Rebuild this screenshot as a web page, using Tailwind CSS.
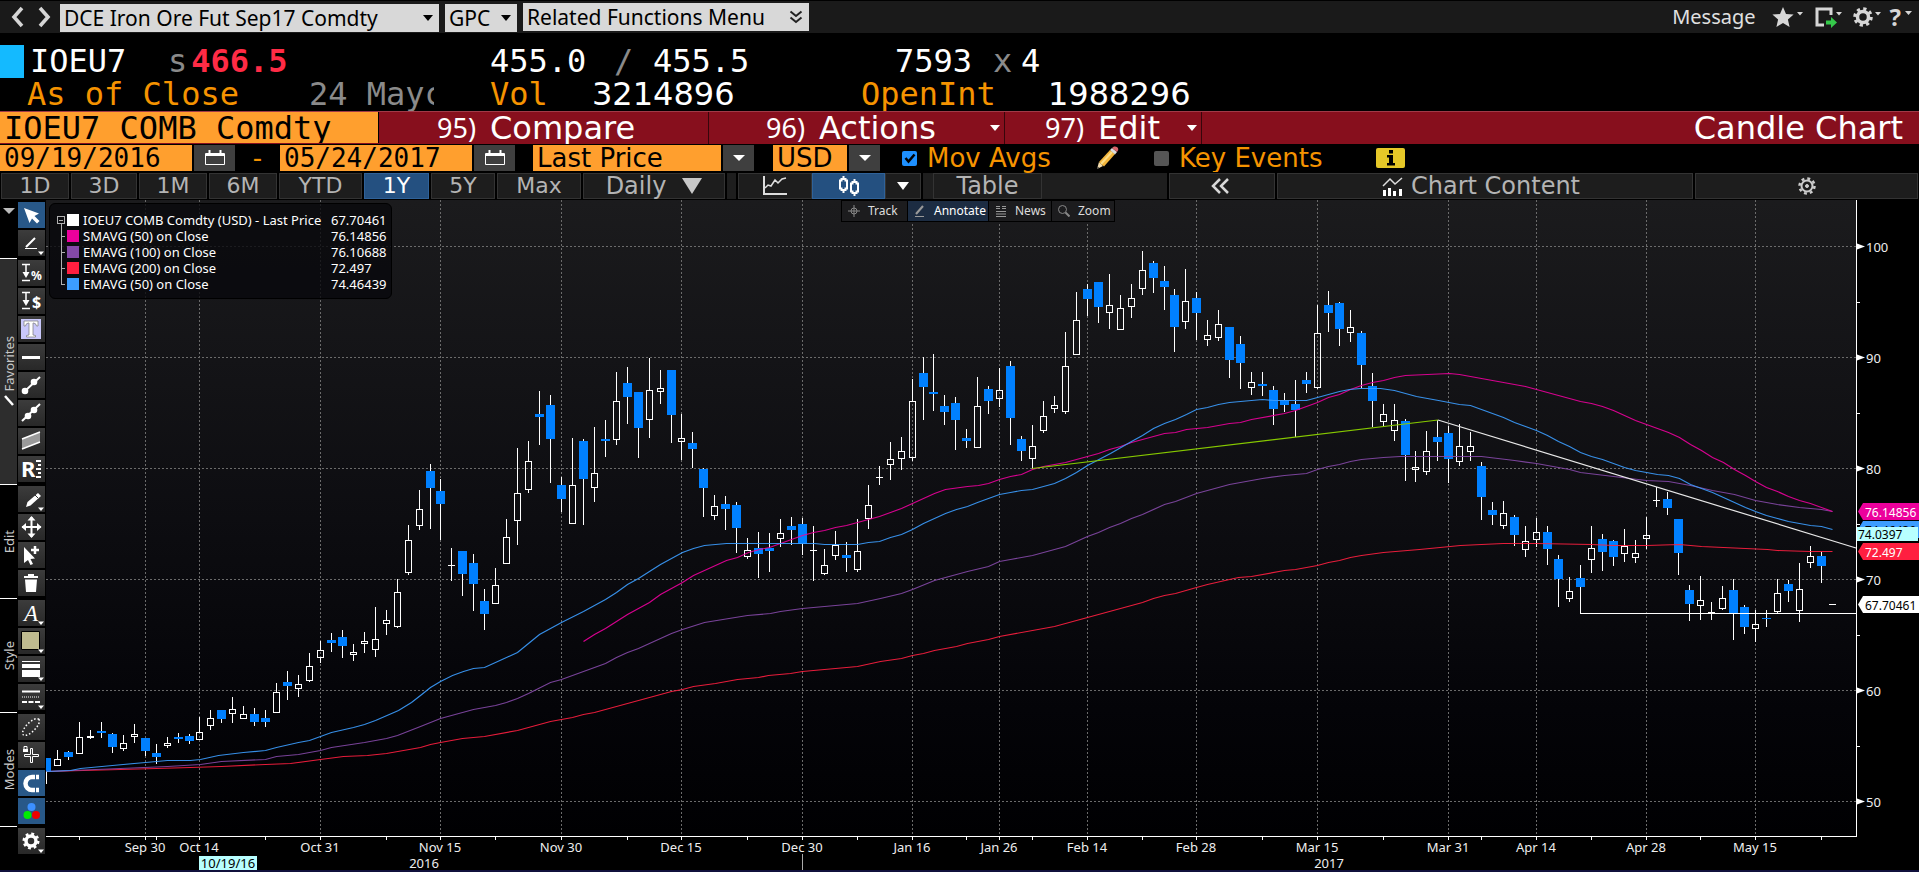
<!DOCTYPE html>
<html lang="en">
<head>
<meta charset="utf-8">
<meta name="viewport" content="width=device-width, initial-scale=1">
<title>IOEU7 COMB Comdty - Candle Chart</title>
<script src="https://cdn.jsdelivr.net/npm/@tailwindcss/browser@4"></script>
</head>
<body class="flex min-h-screen flex-col bg-black font-['Noto_Sans','Open_Sans',sans-serif] text-white">

<!-- Title bar -->
<header class="flex h-[33px] items-center border-t border-black bg-[#1a1a1a] text-[21px] text-black">
  <button type="button" aria-label="Back" class="ml-2.5 flex h-7 w-4 items-center justify-center"><svg class="h-6 w-4" viewBox="0 0 16 24" fill="none" stroke="#d6d6d6" stroke-width="3.6"><path d="M12 3 4 12l8 9"/></svg></button>
  <button type="button" aria-label="Forward" class="ml-2.5 mr-2 flex h-7 w-4 items-center justify-center"><svg class="h-6 w-4" viewBox="0 0 16 24" fill="none" stroke="#d6d6d6" stroke-width="3.6"><path d="m4 3 8 9-8 9"/></svg></button>
  <div class="relative h-7 w-[379px]">
    <select aria-label="Security" class="h-7 w-full appearance-none bg-[#d8d8d8] pl-1 leading-7"><option>DCE Iron Ore Fut Sep17 Comdty</option></select>
    <svg class="pointer-events-none absolute right-1.5 top-3 h-1.5 w-2.5" viewBox="0 0 10 6"><path d="M0 0h10L5 6z"/></svg>
  </div>
  <div class="relative ml-1.5 h-7 w-[72px]">
    <select aria-label="Function" class="h-7 w-full appearance-none bg-[#d8d8d8] pl-1 leading-7"><option>GPC</option></select>
    <svg class="pointer-events-none absolute right-1.5 top-3 h-1.5 w-2.5" viewBox="0 0 10 6"><path d="M0 0h10L5 6z"/></svg>
  </div>
  <button type="button" class="ml-1.5 flex h-7 w-[286px] items-center justify-between bg-[#d8d8d8] pl-1 pr-1.5 leading-7">Related Functions Menu
    <svg class="h-3.5 w-3.5" viewBox="0 0 14 14" fill="none" stroke="#222" stroke-width="2"><path d="m1.500 1.500 5.500 4.500 5.500-4.500M1.500 7.500 7 12l5.500-4.500"/></svg>
  </button>
  <button type="button" class="ml-auto text-xl text-[#e0e0e0]">Message</button>
  <button type="button" aria-label="Favorites menu" class="ml-4"><svg class="h-6 w-8" viewBox="0 0 32 24" fill="#d6d6d6"><path d="m11 2 3 7 7.600.600-5.700 5 1.700 7.400-6.600-4-6.600 4 1.700-7.400-5.700-5L8 9zM25 7h6l-3 3.500z"/></svg></button>
  <button type="button" aria-label="Export" class="ml-2"><svg class="h-6 w-8" viewBox="0 0 32 24"><path d="M19 10V4H5v16h7" fill="none" stroke="#d6d6d6" stroke-width="3"/><path d="M14 15.500h5V12l6 5.500-6 5.500v-3.500h-5z" fill="#35c94a"/><path d="M24 7h6l-3 3.500z" fill="#d6d6d6"/></svg></button>
  <button type="button" aria-label="Settings" class="ml-2"><svg class="h-6 w-8" viewBox="0 0 32 24"><circle cx="11" cy="12" r="5.500" fill="none" stroke="#d6d6d6" stroke-width="3.500"/><circle cx="11" cy="12" r="8" fill="none" stroke="#d6d6d6" stroke-width="3.500" stroke-dasharray="3.140 3.140"/><path d="M23 7h6l-3 3.500z" fill="#d6d6d6"/></svg></button>
  <button type="button" aria-label="Help" class="ml-1.5 mr-1.5 flex items-center text-2xl font-bold text-[#d6d6d6]">?<svg class="mb-2 ml-1 h-1 w-2" viewBox="0 0 8 4" fill="#d6d6d6"><path d="M0 0h7L3.500 4z"/></svg></button>
</header>

<!-- Quote -->
<section class="grid h-[78px] grid-cols-[461px_400px_1fr] grid-rows-[33px_33px] content-end bg-black font-['DejaVu_Sans_Mono',monospace] text-[32px] leading-[33px] whitespace-pre">
  <div class="flex"><span class="mr-[6px] h-[33px] w-6 bg-[#14baff]"></span><span class="w-[138px]">IOEU7</span><span class="text-[#8a8a8a]">s</span><span class="ml-1 font-bold text-[#ff2b45]">466.5</span></div>
  <div class="flex pl-[29px]"><span class="w-[124px]">455.0</span><span class="w-[39px] text-[#8a8a8a]">/</span><span>455.5</span></div>
  <div class="flex pl-[34px]"><span class="w-[98px]">7593</span><span class="w-[28px] text-[#8a8a8a]">x</span><span>4</span></div>
  <div class="flex pl-[27px] text-[#f59300]"><span class="w-[282px]">As of Close</span><span class="w-[125px] overflow-hidden text-[#8a8a8a]">24 Mayc</span></div>
  <div class="flex pl-[29px]"><span class="w-[102px] text-[#f59300]">Vol</span><span class="font-['DejaVu_Sans',sans-serif]">3214896</span></div>
  <div class="flex"><span class="w-[187px] text-[#f59300]">OpenInt</span><span class="font-['DejaVu_Sans',sans-serif]">1988296</span></div>
</section>

<!-- Function bar -->
<nav class="flex h-[33px] border-t border-[#a03a48] bg-[#870f1d] font-['DejaVu_Sans',sans-serif] text-[32px] leading-8">
  <input aria-label="Ticker" value="IOEU7 COMB Comdty" class="h-[31px] w-[379px] border-r border-black bg-[#ff9f2e] pl-1 font-['DejaVu_Sans_Mono',monospace] text-black">
  <button type="button" class="flex w-[330px] gap-3.5 border-r border-black/60 pl-[58px]"><span class="font-['Noto_Sans',sans-serif] text-[27px]">95)</span>Compare</button>
  <button type="button" class="flex w-[296px] items-center gap-3.5 border-r border-black/60 pl-[57px]"><span class="font-['Noto_Sans',sans-serif] text-[27px]">96)</span>Actions<svg class="ml-auto mr-1 h-1.5 w-2.5" viewBox="0 0 10 6" fill="#fff"><path d="M0 0h10L5 6z"/></svg></button>
  <button type="button" class="flex w-[197px] items-center gap-3.5 border-r border-black/60 pl-10"><span class="font-['Noto_Sans',sans-serif] text-[27px]">97)</span>Edit<svg class="ml-auto mr-1 h-1.5 w-2.5" viewBox="0 0 10 6" fill="#fff"><path d="M0 0h10L5 6z"/></svg></button>
  <h1 class="ml-auto mr-4">Candle Chart</h1>
</nav>

<!-- Date range and options -->
<form class="flex h-7 items-center bg-black font-['DejaVu_Sans',sans-serif] text-[26px] leading-[26px] text-[#f59300]">
  <input aria-label="Start date" value="09/19/2016" class="h-[26px] w-[192px] bg-[#ff9f2e] pl-1 font-['DejaVu_Sans_Mono',monospace] text-black">
  <button type="button" aria-label="Pick start date" class="ml-0.5 flex h-[26px] w-[41px] items-center justify-center bg-[#3f3f3f]"><svg class="h-4 w-5" viewBox="0 0 20 16" fill="none" stroke="#fff"><path d="M.500 3.500h19v11H.500zM.500 5.500h19" /><path d="M1 4h18M4.500 0v4M15.500 0v4" stroke-width="2"/></svg></button>
  <span class="w-[45px] text-center">-</span>
  <input aria-label="End date" value="05/24/2017" class="h-[26px] w-[192px] bg-[#ff9f2e] pl-1 font-['DejaVu_Sans_Mono',monospace] text-black">
  <button type="button" aria-label="Pick end date" class="ml-0.5 flex h-[26px] w-[41px] items-center justify-center bg-[#3f3f3f]"><svg class="h-4 w-5" viewBox="0 0 20 16" fill="none" stroke="#fff"><path d="M.500 3.500h19v11H.500zM.500 5.500h19" /><path d="M1 4h18M4.500 0v4M15.500 0v4" stroke-width="2"/></svg></button>
  <select aria-label="Price type" class="ml-[18px] h-[26px] w-[188px] appearance-none bg-[#ff9f2e] pl-1 leading-[26px] text-black"><option>Last Price</option></select>
  <button type="button" aria-label="Choose price type" class="ml-0.5 flex h-[26px] w-[31px] items-center justify-center bg-[#3f3f3f]"><svg class="h-1.5 w-3" viewBox="0 0 12 6" fill="#fff"><path d="M0 0h12L6 6z"/></svg></button>
  <select aria-label="Currency" class="ml-[19px] h-[26px] w-[74px] appearance-none bg-[#ff9f2e] pl-1 leading-[26px] text-black"><option>USD</option></select>
  <button type="button" aria-label="Choose currency" class="ml-0.5 flex h-[26px] w-[31px] items-center justify-center bg-[#3f3f3f]"><svg class="h-1.5 w-3" viewBox="0 0 12 6" fill="#fff"><path d="M0 0h12L6 6z"/></svg></button>
  <label class="relative ml-[22px] flex w-[190px] items-center gap-2.5"><input type="checkbox" checked class="h-[15px] w-[15px] appearance-none rounded-xs bg-[#1e90ff]"><svg class="pointer-events-none absolute left-0.5 h-3 w-3" viewBox="0 0 12 12" fill="none" stroke="#000" stroke-width="2.500"><path d="m1.500 6 3 3.500 6-7"/></svg>Mov Avgs</label>
  <button type="button" aria-label="Edit moving averages" class="ml-1"><svg class="h-6 w-6" viewBox="0 0 24 24"><path d="m1 23 2-7 4 4z" fill="#f3dcae"/><path d="m3 16 11-12 5 4L8 20.500z" fill="#f4b63c"/><path d="m5 18 11-12" stroke="#fbdc86" stroke-width="2"/><path d="m14 4 2-2 5 4-2 2.500z" fill="#ddd"/><path d="m16 2 2-1.500q3-.500 4 1.500t-1 4z" fill="#d9656b"/><path d="m1 23 .700-2.500 1.500 1.500z" fill="#333"/></svg></button>
  <label class="ml-[34px] flex w-[190px] items-center gap-2.5"><input type="checkbox" class="h-[15px] w-[15px] appearance-none rounded-xs bg-[#555]">Key Events</label>
  <button type="button" aria-label="Information" class="ml-8 flex h-5 w-[29px] items-center justify-center rounded-xs bg-[#e6c828]"><svg class="h-4 w-3" viewBox="0 0 12 16"><path d="M4 0h4v3.500H4zM2 5h6v8h2v2.500H2V13h2V7.500H2z"/></svg></button>
</form>

<!-- Range and chart type bar -->
<nav class="flex h-7 items-stretch gap-0.5 bg-black pt-px pb-px pl-px font-['DejaVu_Sans',sans-serif] text-[22px] leading-[26px] text-[#b4b4b4]">
  <button type="button" class="w-[68px] border border-[#333] bg-[#1d1d1d] leading-6">1D</button>
  <button type="button" class="w-[66px] border border-[#333] bg-[#1d1d1d] leading-6">3D</button>
  <button type="button" class="w-[68px] border border-[#333] bg-[#1d1d1d] leading-6">1M</button>
  <button type="button" class="w-[68px] border border-[#333] bg-[#1d1d1d] leading-6">6M</button>
  <button type="button" class="w-[83px] border border-[#333] bg-[#1d1d1d] leading-6">YTD</button>
  <button type="button" class="w-[65px] border border-[#2f6299] bg-[#245080] leading-6 text-white">1Y</button>
  <button type="button" class="w-[64px] border border-[#333] bg-[#1d1d1d] leading-6">5Y</button>
  <button type="button" class="w-[84px] border border-[#333] bg-[#1d1d1d] leading-6">Max</button>
  <button type="button" class="flex w-[142px] items-center justify-center gap-4 border border-[#333] bg-[#1d1d1d] text-2xl leading-6">Daily<svg class="h-4 w-5" viewBox="0 0 20 16" fill="#c8c8c8"><path d="M0 0h20L10 16z"/></svg></button>
  <span class="w-[9px] bg-[#1e1e1e]"></span>
  <div class="flex">
    <button type="button" aria-label="Line chart" class="flex w-[74px] items-center justify-center border border-[#333] bg-[#1d1d1d]"><svg class="h-[22px] w-7" viewBox="0 0 28 22" fill="none" stroke="#ddd" stroke-width="2"><path d="M3 1v18h23"/><path d="m4 13 3-3 3 1 4-6 3 3 4-4 4-1" stroke-width="1.500"/></svg></button>
    <button type="button" aria-label="Candle chart" class="flex w-[73px] items-center justify-center border border-[#2f6299] bg-[#245080]"><svg class="h-5 w-6" viewBox="0 0 24 20" fill="none" stroke="#fff" stroke-width="2"><path d="M6.500 0v3M6.500 14v3M17.500 3v3M17.500 17v3"/><path d="M3 4.500h1.500V3h4v1.500H10v8H8.500V14h-4v-1.500H3zM14 7.500h1.500V6h4v1.500H21v8h-1.500V17h-4v-1.500H14z"/></svg></button>
    <button type="button" aria-label="Chart types" class="flex w-9 items-center justify-center border border-[#333] bg-[#1d1d1d]"><svg class="h-2 w-3" viewBox="0 0 12 8" fill="#fff"><path d="M0 0h12L6 8z"/></svg></button>
  </div>
  <div class="flex w-[244px] bg-[#1e1e1e] pl-2.5"><button type="button" class="w-[109px] border border-[#333] bg-[#1d1d1d] text-2xl leading-6">Table</button></div>
  <button type="button" aria-label="Collapse" class="flex w-[106px] items-center justify-center border border-[#333] bg-[#1d1d1d] pr-1"><svg class="h-4 w-5" viewBox="0 0 20 16" fill="none" stroke="#d8d8d8" stroke-width="2.500"><path d="M10 1 3 8l7 7M18 1l-7 7 7 7"/></svg></button>
  <button type="button" class="flex flex-1 items-center justify-center gap-2 border border-[#333] bg-[#1d1d1d] pr-2 text-2xl leading-6"><svg class="h-[19px] w-[21px]" viewBox="0 0 21 19"><path d="m1 9 7-7 5 5 7-6" fill="none" stroke="#ddd" stroke-width="1.500"/><path d="M1 13h3v6H1zM6 11h3v8H6zM11 14h3v5h-3zM17 12h3v7h-3z" fill="#fff"/></svg>Chart Content</button>
  <button type="button" aria-label="Chart settings" class="mr-px flex w-[223px] items-center justify-center border border-[#333] bg-[#1d1d1d]"><svg class="h-[18px] w-[18px]" viewBox="0 0 18 18" fill="none" stroke="#ccc"><circle cx="9" cy="9" r="5.500" stroke-width="2"/><circle cx="9" cy="9" r="7.500" stroke-width="2.500" stroke-dasharray="2.950 2.950"/><circle cx="9" cy="9" r="1.500" fill="#ccc"/></svg></button>
</nav>

<!-- Annotation tools and chart -->
<main class="flex flex-1 items-start">
  <aside id="tools" aria-label="Annotation tools" class="flex w-[46px] flex-none flex-col"></aside>
  <div class="relative min-w-0 flex-1">
    <svg id="chart" role="img" aria-label="Daily candles of IOEU7 with moving averages" class="block h-auto w-full font-['Noto_Sans',sans-serif] text-[13px]" viewBox="46 200 1873 670"></svg>

    <div class="absolute left-[3px] top-[3px] w-[343px] rounded-md border border-black bg-[#09090d]/80 pt-2 pb-[6px] pl-[17px] text-[13px] leading-4">
      <svg class="absolute left-[7px] top-3 h-[70px] w-3" viewBox="0 0 12 70" fill="none" stroke="#b0b0b0" shape-rendering="crispEdges"><path d="M.500.500h7v7h-7zM2 4.500h4M4.500 8v60.500H8M4.500 20.500H8M4.500 36.500H8M4.500 52.500H8"/></svg>
      <table class="w-full border-collapse"><tbody>
        <tr class="h-4"><td class="w-4"><span class="block h-3 w-3 bg-white"></span></td><td class="whitespace-nowrap">IOEU7 COMB Comdty (USD) - Last Price</td><td class="w-[60px]">67.70461</td></tr>
        <tr class="h-4"><td><span class="block h-3 w-3 bg-[#ec009c]"></span></td><td>SMAVG (50) on Close</td><td>76.14856</td></tr>
        <tr class="h-4"><td><span class="block h-3 w-3 bg-[#8549a8]"></span></td><td>EMAVG (100) on Close</td><td>76.10688</td></tr>
        <tr class="h-4"><td><span class="block h-3 w-3 bg-[#ff1f40]"></span></td><td>EMAVG (200) on Close</td><td>72.497</td></tr>
        <tr class="h-4"><td><span class="block h-3 w-3 bg-[#3c9dff]"></span></td><td>EMAVG (50) on Close</td><td>74.46439</td></tr>
      </tbody></table>
    </div>

    <div class="absolute left-[795px] top-0 flex gap-px border border-black bg-black text-xs leading-5 text-[#dcdcdc]">
      <button type="button" class="flex h-5 w-[65px] items-center gap-2 bg-[#1c1c1e] pl-1.5"><svg class="h-3 w-3" viewBox="0 0 12 12" fill="none" stroke="#888"><circle cx="6" cy="6" r="3"/><path d="M6 0v12M0 6h12"/></svg>Track</button>
      <button type="button" class="flex h-5 w-20 items-center gap-2 bg-[#1c2c42] pl-1.5 text-white"><svg class="h-3 w-3" viewBox="0 0 12 12" fill="none" stroke="#999"><path d="M9 1 2 9" stroke-width="2"/><path d="M1 11.500h9"/></svg>Annotate</button>
      <button type="button" class="flex h-5 w-[62px] items-center gap-2 bg-[#1c1c1e] pl-1.5"><svg class="h-3 w-3" viewBox="0 0 12 12" stroke="#999"><path d="M1 1.500h4M1 3.500h4M7 1.500h4M7 3.500h4M1 6.500h10M1 9h10M1 11.500h10"/></svg>News</button>
      <button type="button" class="flex h-5 w-[62px] items-center gap-2 bg-[#1c1c1e] pl-1.5"><svg class="h-3 w-3" viewBox="0 0 12 12" fill="none" stroke="#888"><circle cx="4.500" cy="4.500" r="4"/><path d="m7.500 7.500 4 4" stroke-width="2"/></svg>Zoom</button>
    </div>
  </div>
</main>
<footer class="h-0.5 bg-[#10103c]"></footer>

<script>
// Annotation tool icons, drawn on a 27 x 26 grid
const more = '<path d="M20 21.500h6l-3 3.500z" fill="#fff"/>';
const measure = '<path d="M4 4.500h8M4 20.500h8M8 4v10" stroke="#fff" stroke-width="1.500"/><path d="M4.500 12h7L8 18z" fill="#fff"/>';
const icons = {
  'Select': '<path d="m6 6 15 5.500-4.500 2.500 5 5-2.500 2.500-5-5-2.500 4.500z" fill="#fff"/>',
  'Line': '<path d="m17 8-9 9" stroke="#fff" stroke-width="2"/><path d="M7 18.500h12" stroke="#fff"/>' + more,
  'Percent change': measure + '<text x="13" y="20" font-size="12" font-weight="700" fill="#fff">%</text>',
  'Price change': measure + '<text x="14" y="20" font-size="16" font-weight="700" fill="#fff">$</text>',
  'Text': '<path d="M3 3h20v20H3z" fill="#c9c8fb"/><path d="M6 5h14v5h-1.500q-.500-3-3-3H15v12l2.500.500V21h-9v-1.500L11 19V7h-.500q-2.500 0-3 3H6z" fill="#fff" stroke="#777" stroke-width=".7"/>',
  'Horizontal line': '<path d="M4 12h18v3H4z" fill="#fff"/>',
  'Segment': '<path d="M7 19 22 5" stroke="#fff" stroke-width="2"/><circle cx="7" cy="19" r="3.300" fill="#fff"/><circle cx="16" cy="10" r="3.300" fill="#fff"/>',
  'Trend line': '<path d="M4 21 22 4" stroke="#fff" stroke-width="2"/><circle cx="10" cy="16" r="3.300" fill="#fff"/><circle cx="16" cy="10" r="3.300" fill="#fff"/>',
  'Channel': '<path d="m4 11 18-7v10L4 21z" fill="#9a9a9a"/><path d="m4 11 18-7M4 21l18-7" stroke="#fff" stroke-width="1.500"/>',
  'Retracement': '<text x="3" y="21" font-size="22" font-weight="700" fill="#fff">R</text><path d="M18 5h5M20 9h3M18 13h5M20 17h3M18 21h5" stroke="#fff" stroke-width="2"/>',
  'Edit': '<path d="m8 21 1.500-5L20 7l3 3-10.500 9.500z" fill="#fff"/><path d="m17 9 3 3" stroke="#333"/>' + more,
  'Move': '<path d="M13.500 3v20M4 13h19" stroke="#fff" stroke-width="2"/><path d="m13.500 2 4 4.500h-8zM13.500 24l4-4.500h-8zM3.500 13 8 9v8zM23.500 13 19 9v8z" fill="#fff"/>',
  'Duplicate': '<path d="m6 5 11 11.500-4.500.500 2.500 5-2.500 1-2.500-5-4 3z" fill="#fff"/><path d="M17 4v8M13 8h8" stroke="#fff" stroke-width="2.500"/>',
  'Delete': '<path d="M6 6h14v2H6zM7 9.500h12L18 22H8zM10 4h6v2h-6z" fill="#fff"/>',
  'Font': '<text x="6" y="21" font-size="23" font-style="italic" font-family="Liberation Serif" fill="#fff">A</text>' + more,
  'Fill color': '<path d="M3.500 3.500h18v18h-18z" fill="#bfbb8f" stroke="#000"/>' + more,
  'Line width': '<path d="M4 5h18v1H4zM4 8h18v4H4zM4 14h18v7H4z" fill="#fff"/>' + more,
  'Line style': '<path d="M4 7.500h18" stroke="#fff" stroke-width="2"/><path d="M4 13h18" stroke="#fff" stroke-dasharray="1 1"/><path d="M4 18h18" stroke="#fff" stroke-width="2" stroke-dasharray="5 1.500"/>' + more,
  'Lasso': '<ellipse cx="13" cy="13" rx="11" ry="4.500" transform="rotate(-45 13 13)" fill="none" stroke="#fff" stroke-width="1.500" stroke-dasharray="1.500 2"/>',
  'Lock position': '<path d="M5 7h5v3H5z" fill="#fff"/><path d="M6 7V4.500h3V7" stroke="#fff"/><path d="M12.500 6.500h2v6h6v2h-6v6h-2v-6h-6v-2h6z" stroke="#fff"/>',
  'Magnet': '<path d="M21 7h-7a6.500 6.500 0 0 0 0 13h7" fill="none" stroke="#fff" stroke-width="4.500"/><path d="M17.500 4v6M17.500 17v6" stroke="#285888"/>',
  'Colors': '<circle cx="13.500" cy="9" r="4" fill="#3c90ff"/><circle cx="9.500" cy="17" r="4" fill="#0e0"/><circle cx="18" cy="17" r="4" fill="#e00"/>',
  'Preferences': '<circle cx="13" cy="13" r="5" fill="none" stroke="#fff" stroke-width="3.500"/><circle cx="13" cy="13" r="7" fill="none" stroke="#fff" stroke-width="3" stroke-dasharray="2.750 2.750"/>' + more
};
const groups = [
  ['', 'Select', 'Line'],
  ['Favorites', 'Percent change', 'Price change', 'Text', 'Horizontal line', 'Segment', 'Trend line', 'Channel', 'Retracement'],
  ['Edit', 'Edit', 'Move', 'Duplicate', 'Delete'],
  ['Style', 'Font', 'Fill color', 'Line width', 'Line style'],
  ['Modes', 'Lasso', 'Lock position', 'Magnet', 'Colors'],
  ['', 'Preferences']
];
const active = ['Select', 'Magnet', 'Colors'];
const brush = '<svg class="mt-1 h-3 w-3 flex-none" viewBox="0 0 12 12"><path d="m2 1 8 9" stroke="#fff" stroke-width="2.500"/></svg>';
document.getElementById('tools').innerHTML = groups.map(([name, ...items], g) => {
  const tab = g === 0
    ? '<div class="flex w-[17px] justify-center pt-2"><svg class="h-1.5 w-3" viewBox="0 0 12 6"><path d="M0 0h12L6 6z" fill="#bbb"/></svg></div>'
    : `<div class="${name === 'Favorites' ? 'flex w-[17px] flex-col items-center justify-center border-t border-white bg-[#2d2d2d] text-[13px] leading-4 text-[#c8c8c8]' : 'flex w-[17px] flex-col items-center justify-center border-t border-white text-[13px] leading-4 text-[#c8c8c8]'}"><span class="rotate-180 [writing-mode:vertical-rl]">${name}</span>${name === 'Favorites' ? brush : ''}</div>`;
  const buttons = items.map(i =>
    `<button type="button" aria-label="${i}" class="${active.includes(i) ? 'h-[26px] w-[27px] bg-[#285888]' : 'h-[26px] w-[27px] bg-linear-to-b from-[#3c3c3c] to-[#282828]'}"><svg class="block h-[26px] w-[27px]" viewBox="0 0 27 26" fill="none">${icons[i]}</svg></button>`).join('');
  return `<div class="flex gap-px">${tab}<div class="flex flex-col gap-0.5 pt-0.5 pb-0.5">${buttons}</div></div>`;
}).join('');

// Sessions: [high, body top, body bottom, low, rising]
const sessions = [
[758,758,771,784,0],[750,759,766,766,1],[751,752,757,760,0],[722,737,754,754,1],[730,736,738,739,1],[722,731,733,738,0],[733,734,747,753,0],[735,743,749,751,1],[724,734,737,743,1],
[738,738,751,756,0],[744,753,757,764,0],[737,743,746,748,1],[733,737,739,743,0],[734,736,741,744,0],[717,732,740,740,1],[710,718,726,730,1],[710,710,719,723,0],[697,709,714,723,1],[706,714,719,719,1],
[708,714,722,726,0],[710,718,722,727,0],[683,692,713,713,1],[671,682,686,700,0],[675,684,689,697,1],[653,666,681,682,1],[641,650,658,663,1],[633,640,643,652,0],[630,637,646,658,0],[644,652,655,661,1],
[632,641,644,653,1],[607,639,650,657,1],[610,620,624,635,1],[579,592,627,628,1],[525,540,573,575,1],[490,509,526,530,1],[464,471,488,529,0],[479,491,504,540,0],[548,565,566,581,1],[551,551,574,596,0],
[554,563,584,611,0],[589,601,614,630,0],[568,585,604,604,1],[519,537,564,564,1],[448,493,521,545,1],[441,461,490,493,1],[391,414,417,445,0],[395,405,439,483,0],[477,485,499,512,0],[438,485,524,524,1],
[439,441,479,525,0],[427,473,488,502,1],[420,439,441,457,0],[372,401,440,445,1],[367,383,397,424,0],[392,392,428,458,0],[358,390,420,438,1],[370,388,392,404,1],[370,370,415,443,0],[414,438,442,460,1],
[432,443,449,468,0],[468,469,488,517,0],[495,506,516,520,1],[496,504,509,530,0],[502,505,528,553,0],[538,550,557,559,1],[532,548,554,578,0],[533,548,551,572,0],[519,533,539,547,1],[517,526,530,545,0],
[518,524,544,555,0],[526,550,551,581,1],[549,565,574,575,1],[531,545,556,560,1],[542,555,558,572,0],[519,551,570,572,1],[485,505,519,529,1],[466,477,478,485,1],[442,459,465,480,1],[437,451,459,470,1],
[379,401,458,461,1],[357,373,387,420,0],[354,392,394,411,0],[395,406,412,425,0],[397,403,420,450,0],[429,438,441,448,0],[377,406,448,448,1],[386,389,401,414,0],[368,390,399,407,1],[361,366,418,445,0],
[436,439,451,461,0],[425,446,459,469,1],[401,416,431,433,1],[396,405,409,413,1],[332,366,412,414,1],[292,320,355,355,1],[284,289,299,316,0],[282,282,307,323,0],[274,305,313,329,1],[295,308,330,330,1],
[284,298,307,318,1],[251,270,289,295,1],[261,263,278,293,0],[266,281,287,310,0],[289,295,327,352,0],[269,301,322,329,1],[292,298,313,340,0],[320,335,340,346,1],[310,324,338,341,1],[327,327,360,378,0],
[336,344,363,389,0],[372,382,388,395,1],[372,384,386,396,0],[386,390,409,425,0],[393,400,405,412,0],[380,404,410,437,0],[372,380,384,393,0],[305,333,388,389,1],[291,305,313,332,0],[302,303,329,346,0],
[310,327,333,342,1],[331,333,365,388,0],[373,386,401,427,0],[404,414,422,426,1],[404,420,431,441,1],[419,421,455,481,0],[451,467,470,482,1],[431,451,472,475,1],[420,437,442,461,0],[426,433,459,483,0],
[424,446,462,466,1],[432,446,452,461,1],[462,466,497,520,0],[502,510,515,525,0],[501,513,526,529,1],[515,517,535,546,0],[526,541,550,557,1],[518,532,540,547,1],[526,532,549,565,0],[555,559,579,607,0],
[577,591,599,602,1],[565,578,587,613,0],[526,548,560,573,1],[534,539,552,571,0],[540,541,557,566,0],[529,546,554,562,1],[540,553,558,563,1],[517,535,539,549,1],[487,500,501,507,1],[492,499,508,515,0],
[519,519,553,575,0],[585,590,604,621,0],[576,600,606,620,1],[602,612,613,620,1],[586,598,609,610,1],[579,590,613,640,0],[605,607,627,634,0],[610,624,629,642,1],[610,618,619,627,0],[579,593,612,613,1],
[580,584,591,602,0],[563,589,611,622,1],[546,556,563,568,1],[552,556,566,583,0],[604,604,605,605,1]];

const averages = {
'#ff1f40': '46,771 120,769 156,768 190,767 221,766 265,764 290,763 320,759 343,756 367,755 386,753 420,747 430,744 440,742 462,738 484,736 517,730 550,721 572,717 583,714 594,712 671,691 682,689 693,686 715,683 737,679 758,677 768,675 790,673 802,671 857,666 880,661 901,658 912,655 923,653 934,650 956,646 967,643 988,639 999,636 1054,626 1087,617 1142,602 1153,598 1164,595 1175,593 1196,587 1207,584 1229,579 1238,577 1251,576 1284,570 1295,569 1317,565 1328,562 1339,560 1350,557 1361,555 1383,552 1419,549 1460,545 1481,544 1503,543 1536,543 1591,544 1613,545 1646,545 1679,544 1701,546 1723,547 1745,548 1767,549 1777,550 1810,551 1832,551',
'#8549a8': '46,771 120,768 167,766 200,764 221,761 265,759 276,756 298,754 320,750 331,747 364,742 386,738 397,735 420,726 430,722 440,718 473,709 495,705 506,702 517,698 528,693 550,682 561,679 583,671 605,663 616,657 627,652 638,648 671,633 682,629 704,622 747,615 770,613 780,611 802,608 857,603 880,598 901,593 912,589 934,580 967,571 988,566 999,561 1010,559 1032,555 1065,546 1087,536 1098,532 1109,527 1120,523 1131,518 1142,514 1164,504 1175,501 1196,493 1229,484 1251,480 1262,478 1284,475 1306,473 1317,469 1328,466 1339,464 1350,461 1361,459 1383,457 1400,456 1481,456 1514,460 1536,463 1569,469 1580,472 1613,476 1646,480 1668,481 1690,485 1712,490 1734,494 1755,500 1777,504 1799,507 1821,509 1832,511',
'#ec009c': '583,641 594,634 605,628 616,621 627,614 638,608 649,602 660,594 671,588 682,582 693,575 704,570 715,565 726,560 737,557 748,552 759,549 769,547 780,543 791,539 802,535 813,532 824,530 835,527 846,525 857,522 868,519 879,516 890,512 901,508 912,503 923,498 934,493 945,489 967,486 978,485 988,483 999,479 1010,476 1021,474 1032,469 1043,466 1054,464 1065,462 1076,459 1087,456 1098,453 1109,449 1120,446 1131,442 1142,439 1153,436 1164,433 1175,432 1186,429 1207,427 1229,423 1240,422 1251,419 1284,413 1295,410 1306,406 1317,402 1328,397 1339,394 1350,389 1361,385 1372,382 1383,380 1394,377 1405,375 1427,374 1449,373 1459,374 1470,376 1481,378 1503,382 1525,386 1547,392 1580,401 1591,403 1602,406 1613,410 1635,420 1646,424 1657,428 1668,432 1679,437 1690,444 1701,450 1712,457 1723,462 1734,469 1745,475 1755,481 1766,487 1777,491 1788,496 1799,500 1810,503 1821,507 1832,511',
'#3c9dff': '46,771 70,770 80,768 112,765 145,762 167,760 190,760 200,759 218,755 243,752 265,750 276,747 298,742 309,740 331,732 353,727 364,724 375,720 398,710 411,702 420,695 430,687 440,681 452,675 463,671 473,668 484,667 495,662 506,657 517,652 528,643 539,634 550,628 561,622 573,616 583,611 594,605 605,599 616,592 627,584 638,578 649,571 660,564 671,558 682,552 693,548 704,545 726,543 814,543 824,544 857,544 868,542 879,541 890,537 901,534 912,529 923,523 934,518 945,513 956,509 967,506 977,502 988,498 999,494 1010,492 1021,490 1032,489 1043,486 1054,483 1065,478 1076,472 1087,465 1110,453 1131,441 1142,435 1153,428 1164,423 1175,419 1186,414 1196,409 1207,407 1218,404 1229,402 1240,401 1262,399 1273,400 1306,400 1317,397 1328,394 1339,391 1349,389 1360,388 1380,388 1394,390 1405,393 1416,396 1438,400 1459,404 1470,405 1481,409 1492,413 1503,417 1514,422 1525,426 1536,430 1547,435 1558,441 1569,446 1580,452 1591,456 1602,459 1613,463 1624,467 1635,470 1646,472 1657,474 1668,475 1679,478 1690,484 1701,488 1712,492 1723,497 1734,502 1745,507 1755,511 1766,515 1777,518 1788,521 1810,525 1821,526 1832,529'
};

// Session index to x; index 0 is Sep 30
const x = k => Math.round(144.7 + 10.955 * k);
const days = {0:'Sep 30',5:'Oct 14',16:'Oct 31',27:'Nov 15',38:'Nov 30',49:'Dec 15',60:'Dec 30',70:'Jan 16',78:'Jan 26',86:'Feb 14',96:'Feb 28',107:'Mar 15',119:'Mar 31',127:'Apr 14',137:'Apr 28',147:'May 15'};
const minor = [-6, 1, 11, 22, 32, 44, 55, 65, 75, 81, 91, 102, 113, 122, 132, 142, 153];
const levels = [100, 90, 80, 70, 60, 50];
const yOf = v => 246.5 + (100 - v) * 11.1;

let s = '<defs><linearGradient id="sky" x2="0" y2="1"><stop stop-color="#1b1b1d"/><stop offset=".5" stop-color="#0d0d11"/><stop offset=".8" stop-color="#040408"/><stop offset="1" stop-color="#000002"/></linearGradient></defs>'
  + '<path d="M46 200h1873v670H46z" fill="#000"/><path d="M46 200h1810v636H46z" fill="url(#sky)"/><g shape-rendering="crispEdges">';
for (const v of levels) s += `<path d="M46 ${yOf(v)}H1856" stroke="#6b6b6b" stroke-dasharray="2 2"/>`;
for (const k in days) s += `<path d="M${x(k) + .5} 200V836" stroke="#6b6b6b" stroke-dasharray="2 2"/>`;
sessions.forEach(([hi, top, bot, lo, up], i) => {
  const c = x(i - 9);
  s += `<path d="M${c + .5} ${hi}V${top}M${c + .5} ${bot}V${lo}" stroke="#fff"/>`;
  if (!up) s += `<path d="M${Math.max(46, c - 4)} ${top}H${c + 5}V${bot}H${Math.max(46, c - 4)}z" fill="#0080ff"/>`;
  else if (bot - top < 2) s += `<path d="M${c - 3} ${top + .5}h7" stroke="#fff"/>`;
  else s += `<path d="M${c - 2.5} ${top + .5}h6V${bot - .5}h-6z" fill="none" stroke="#fff"/>`;
});
s += '</g>';
for (const c in averages) s += `<polyline points="${averages[c]}" transform="translate(.5 .5)" fill="none" stroke="${c}" stroke-width="1.2" opacity=".9"/>`;
s += '<path d="M1032 468.500 1438 420" stroke="#86c800" stroke-width="1.200"/><path d="m1438 420 418 128" stroke="#e8e8e8" stroke-width="1.200"/>'
  + '<path d="M1580.500 587v26.500H1856M46 836.500h1811M1856.500 200v637" fill="none" stroke="#fff" shape-rendering="crispEdges"/>';
for (const k in days) s += `<path d="M${x(k) + .5} 837v3" stroke="#fff"/><text x="${x(k)}" y="852" font-size="13" text-anchor="middle" fill="#eee">${days[k]}</text>`;
for (const k of minor) s += `<path d="M${x(k) + .5} 837v3" stroke="#fff"/>`;
for (const v of levels) {
  s += `<path d="M1857 ${yOf(v) - 3}l8 3-8 3z" fill="#fff"/><text x="1866" y="${yOf(v) + 5.5}" font-size="13" fill="#eee">${v}</text>`;
  if (v > 50) s += `<path d="M1857 ${yOf(v) + 56}h3" stroke="#fff"/>`;
}
s += '<text x="424" y="868" font-size="13" text-anchor="middle" fill="#eee">2016</text><text x="1329" y="868" font-size="13" text-anchor="middle" fill="#eee">2017</text><path d="M802.500 854v16" stroke="#aaa"/>'
  + '<path d="M199 856h58v14h-58z" fill="#b8ffff"/><text x="228" y="868" font-size="13" text-anchor="middle" fill="#000">10/19/16</text>';
const tag = (y, bg, fg, t) => `<path d="M1858 ${y}l5-8.500h56v17h-56z" fill="${bg}"/><text x="1865" y="${y + 5}" font-size="12" fill="${fg}">${t}</text>`;
s += tag(511.5, '#ec009c', '#fff', '76.14856') + tag(529.5, '#3c9dff', '#000', '74.46439')
  + '<path d="M1857 527h61v14h-61z" fill="#b8ffff"/><text x="1858" y="539" font-size="12" fill="#000">74.0397</text>'
  + tag(551.5, '#ff1f40', '#fff', '72.497') + tag(604.5, '#fff', '#000', '67.70461');
document.getElementById('chart').innerHTML = s;
</script>
</body>
</html>
